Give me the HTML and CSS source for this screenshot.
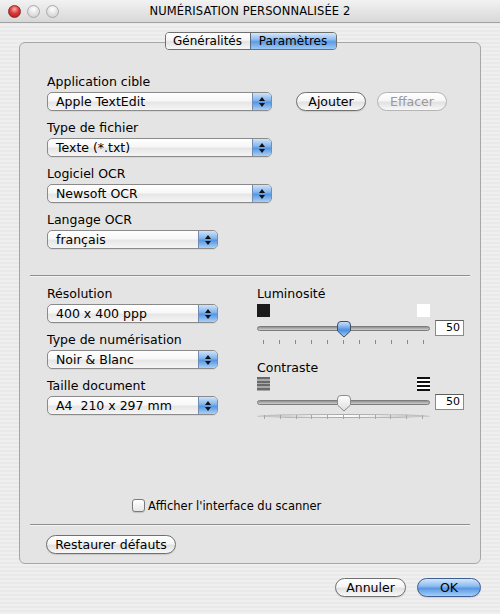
FILE: index.html
```html
<!DOCTYPE html>
<html lang="fr">
<head>
<meta charset="utf-8">
<title>NUMÉRISATION PERSONNALISÉE 2</title>
<link rel="stylesheet" href="styles.css">
</head>
<body>
<div class="window">
  <div class="titlebar">
    <div class="lights"><span class="light red"></span><span class="light"></span><span class="light"></span></div>
    <div class="title">NUMÉRISATION PERSONNALISÉE 2</div>
    <div></div>
  </div>
  <div class="content">
    <div class="tabs">
      <span class="tab t1">Généralités</span><span class="tab t2 active">Paramètres</span>
    </div>
    <div class="group">
      <div class="upper">
        <div class="field">
          <div class="label">Application cible</div>
          <div class="row">
            <div class="popup wide"><span class="val">Apple TextEdit</span><span class="arrows"><i class="up"></i><i class="down"></i></span></div>
            <button class="btn add">Ajouter</button>
            <button class="btn del" disabled>Effacer</button>
          </div>
        </div>
        <div class="field">
          <div class="label">Type de fichier</div>
          <div class="popup wide"><span class="val">Texte (*.txt)</span><span class="arrows"><i class="up"></i><i class="down"></i></span></div>
        </div>
        <div class="field">
          <div class="label">Logiciel OCR</div>
          <div class="popup wide"><span class="val">Newsoft OCR</span><span class="arrows"><i class="up"></i><i class="down"></i></span></div>
        </div>
        <div class="field">
          <div class="label">Langage OCR</div>
          <div class="popup narrow"><span class="val">français</span><span class="arrows"><i class="up"></i><i class="down"></i></span></div>
        </div>
      </div>
      <div class="sep first"></div>
      <div class="lower">
        <div class="col-left">
          <div class="field">
            <div class="label">Résolution</div>
            <div class="popup narrow"><span class="val">400 x 400 ppp</span><span class="arrows"><i class="up"></i><i class="down"></i></span></div>
          </div>
          <div class="field">
            <div class="label">Type de numérisation</div>
            <div class="popup narrow"><span class="val">Noir &amp; Blanc</span><span class="arrows"><i class="up"></i><i class="down"></i></span></div>
          </div>
          <div class="field">
            <div class="label">Taille document</div>
            <div class="popup narrow"><span class="val">A4&nbsp; 210 x 297 mm</span><span class="arrows"><i class="up"></i><i class="down"></i></span></div>
          </div>
        </div>
        <div class="col-right">
          <div class="label">Luminosité</div>
          <div class="icons">
            <span class="sq black"></span><span class="sq white"></span>
          </div>
          <div class="slider-row">
            <div class="slider">
              <div class="track"></div>
              <svg class="thumb" width="16" height="18" viewBox="0 0 16 18">
                <defs>
                  <linearGradient id="gb" x1="0" y1="0" x2="0" y2="1">
                    <stop offset="0" stop-color="#d2e6fb"/>
                    <stop offset="0.35" stop-color="#7fb2ec"/>
                    <stop offset="0.55" stop-color="#4e8ede"/>
                    <stop offset="1" stop-color="#a7cff6"/>
                  </linearGradient>
                </defs>
                <path d="M1.5 5 Q1.5 1.5 5 1.5 H11 Q14.5 1.5 14.5 5 V11 L8 17 L1.5 11 Z" fill="url(#gb)" stroke="#3f4f66" stroke-width="1"/>
              </svg>
            </div>
            <div class="valbox">50</div>
          </div>
          <div class="ticks"><i></i><i></i><i></i><i></i><i></i><i></i><i></i><i></i><i></i><i></i><i></i></div>

          <div class="label second">Contraste</div>
          <div class="icons">
            <span class="sq lowc"></span><span class="sq highc"></span>
          </div>
          <div class="slider-row">
            <div class="slider">
              <div class="track"></div>
              <svg class="thumb" width="16" height="18" viewBox="0 0 16 18">
                <defs>
                  <linearGradient id="gw" x1="0" y1="0" x2="0" y2="1">
                    <stop offset="0" stop-color="#ffffff"/>
                    <stop offset="0.5" stop-color="#eeeeee"/>
                    <stop offset="1" stop-color="#dcdcdc"/>
                  </linearGradient>
                </defs>
                <path d="M1.5 5 Q1.5 1.5 5 1.5 H11 Q14.5 1.5 14.5 5 V11 L8 17 L1.5 11 Z" fill="url(#gw)" stroke="#8c8c8c" stroke-width="1"/>
              </svg>
            </div>
            <div class="valbox">50</div>
          </div>
          <div class="ticks light"><i></i><i></i><i></i><i></i><i></i><i></i><i></i><i></i><i></i><i></i><i></i></div>
        </div>
      </div>
      <div class="check">
        <span class="box"></span><span class="check-label">Afficher l'interface du scanner</span>
      </div>
      <div class="sep second"></div>
      <div class="restore">
        <button class="btn restore-btn">Restaurer défauts</button>
      </div>
    </div>
    <div class="footer">
      <button class="btn cancel">Annuler</button>
      <button class="btn ok">OK</button>
    </div>
  </div>
</div>
</body>
</html>
```

FILE: styles.css
```css
* { box-sizing: border-box; }
html, body { margin: 0; padding: 0; }
body {
  width: 500px;
  height: 614px;
  overflow: hidden;
  font-family: "DejaVu Sans", "Lucida Grande", sans-serif;
  font-size: 12.5px;
  color: #000;
}
.window {
  width: 500px;
  height: 614px;
  background: repeating-linear-gradient(to bottom, #efefef 0, #efefef 2px, #e9e9e9 2px, #e9e9e9 4px);
  display: flex;
  flex-direction: column;
}
.titlebar {
  height: 23px;
  flex: none;
  display: grid;
  grid-template-columns: 1fr auto 1fr;
  align-items: center;
  background: linear-gradient(#f2f2f2, #d8d8d8);
  border-bottom: 1px solid #a2a2a2;
}
.lights { display: flex; gap: 6px; padding-left: 8px; }
.light {
  width: 13px; height: 13px; border-radius: 50%;
  border: 1px solid #a9a9a9;
  background: radial-gradient(circle at 50% 30%, #ffffff 0, #e6e6e6 45%, #c9c9c9 100%);
}
.light.red {
  border-color: #8e2b2b;
  background: radial-gradient(circle at 50% 30%, #f8b0b0 0, #dc3a3a 45%, #a51818 100%);
}
.title { font-size: 11.5px; letter-spacing: 0.1px; }

.content { padding: 9px 19px 0; display: flex; flex-direction: column; flex: 1; }
.tabs {
  position: relative;
  z-index: 1;
  align-self: center;
  display: flex;
  height: 18px;
  margin-bottom: -8px;
  border: 1px solid #6f6f6f;
  border-radius: 4px;
  overflow: hidden;
  margin-left: 1px;
  font-size: 12px;
}
.tab {
  display: block;
  text-align: center;
  line-height: 16px;
  background: linear-gradient(#ffffff 0, #f5f5f5 45%, #e3e3e3 55%, #f7f7f7 100%);
}
.tab.t1 { width: 84px; }
.tab.t2 { width: 86px; border-left: 1px solid #5c6a80; }
.tab.active {
  background: linear-gradient(#d6e8fb 0, #8fbdf0 40%, #5f9be3 55%, #9ccaf6 100%);
}

.group {
  height: 522px;
  border: 1px solid #a6a6a6;
  border-radius: 6px;
  background: #e4e4e4;
  padding: 31px 10px 0;
}
.label { height: 15px; line-height: 15px; margin-bottom: 3px; white-space: nowrap; }
.field { margin-bottom: 9px; }
.upper { padding-left: 17px; }
.row { display: flex; align-items: center; }

.popup {
  height: 19px;
  display: flex;
  border: 1px solid #8a8a8a;
  border-radius: 5px;
  overflow: hidden;
  background: linear-gradient(#ffffff 0, #f7f7f7 45%, #e6e6e6 55%, #f5f5f5 100%);
  box-shadow: 0 1px 0 rgba(0,0,0,0.06);
}
.popup.wide { width: 225px; }
.popup.narrow { width: 171px; }
.popup .val { flex: 1; padding-left: 8px; line-height: 17px; white-space: nowrap; }
.popup .arrows {
  width: 19px;
  border-left: 1px solid #6e8cb5;
  background: linear-gradient(#cfe3fa 0, #84b6ee 42%, #5895e0 55%, #a9d1f7 100%);
  display: flex;
  flex-direction: column;
  align-items: center;
  justify-content: center;
  gap: 2px;
}
.arrows i { display: block; width: 0; height: 0; border-left: 3px solid transparent; border-right: 3px solid transparent; }
.arrows .up { border-bottom: 4px solid #111; }
.arrows .down { border-top: 4px solid #111; }

.btn {
  height: 19px;
  border: 1px solid #707070;
  border-radius: 10px;
  background: linear-gradient(#ffffff 0, #f6f6f6 45%, #e2e2e2 55%, #f8f8f8 100%);
  font-family: inherit;
  font-size: 12.5px;
  color: #000;
  padding: 0;
  line-height: 17px;
  box-shadow: 0 1px 1px rgba(0,0,0,0.12);
}
.btn.add { width: 70px; margin-left: 24px; }
.btn.del { width: 70px; margin-left: 11px; color: #9a9a9a; border-color: #b4b4b4; box-shadow: none; }

.sep { height: 1px; background: #8f8f8f; box-shadow: 0 1px 0 #f4f4f4; }
.sep.first { margin-top: 26px; margin-bottom: 10px; }

.lower { display: flex; padding-left: 17px; }
.col-left { width: 210px; }
.col-right { width: 207px; }
.icons { display: flex; justify-content: space-between; width: 173px; }
.sq { width: 13px; height: 13px; display: block; }
.sq.black { background: #1b1b1b; }
.sq.white { background: #ffffff; }
.sq.lowc { height: 14px; background: repeating-linear-gradient(to bottom, #6a6a6a 0, #6a6a6a 2px, #a8a8a8 2px, #a8a8a8 3.5px); }
.sq.highc { height: 14px; background: repeating-linear-gradient(to bottom, #111 0, #111 2px, #fff 2px, #fff 4px); }

.slider-row { display: flex; align-items: center; height: 18px; margin-top: 2px; }
.slider { position: relative; width: 173px; height: 18px; display: flex; align-items: center; }
.track {
  width: 100%;
  height: 5px;
  border-radius: 3px;
  border: 1px solid #7c7c7c;
  background: linear-gradient(#8f8f8f, #cfcfcf);
}
.thumb { position: absolute; left: 79px; top: 1px; }
.valbox {
  margin-left: 5px;
  width: 29px;
  height: 16px;
  background: #fff;
  border: 1px solid #8a8a8a;
  border-top-color: #5e5e5e;
  text-align: right;
  padding-right: 3px;
  font-size: 11px;
  line-height: 14px;
}
.ticks { display: flex; justify-content: space-between; width: 173px; padding: 0 6px 0 6px; margin-top: 3px; height: 4px; }
.ticks i { display: block; width: 1px; height: 4px; background: #8a8a8a; }
.ticks.light i { background: #a6a6a6; }
.label.second { margin-top: 16px; margin-bottom: 2px; }

.check { display: flex; align-items: center; height: 15px; margin-top: 74px; padding-left: 102px; }
.box {
  width: 13px; height: 13px;
  border: 1px solid #7a7a7a;
  border-radius: 3px;
  background: linear-gradient(#ffffff, #e8e8e8);
  box-shadow: 0 1px 1px rgba(0,0,0,0.15);
}
.check-label { margin-left: 3px; font-size: 11.5px; }
.sep.second { margin-top: 11px; }
.restore { padding-left: 16px; margin-top: 10px; }
.restore-btn { width: 130px; }

.footer { display: flex; justify-content: flex-end; gap: 11px; margin-top: 14px; }
.cancel { width: 71px; }
.ok {
  width: 64px;
  border-color: #3d5f94;
  background: linear-gradient(#d3e6fb 0, #8cbcf0 42%, #5a97e2 55%, #a3cff8 100%);
}
```
